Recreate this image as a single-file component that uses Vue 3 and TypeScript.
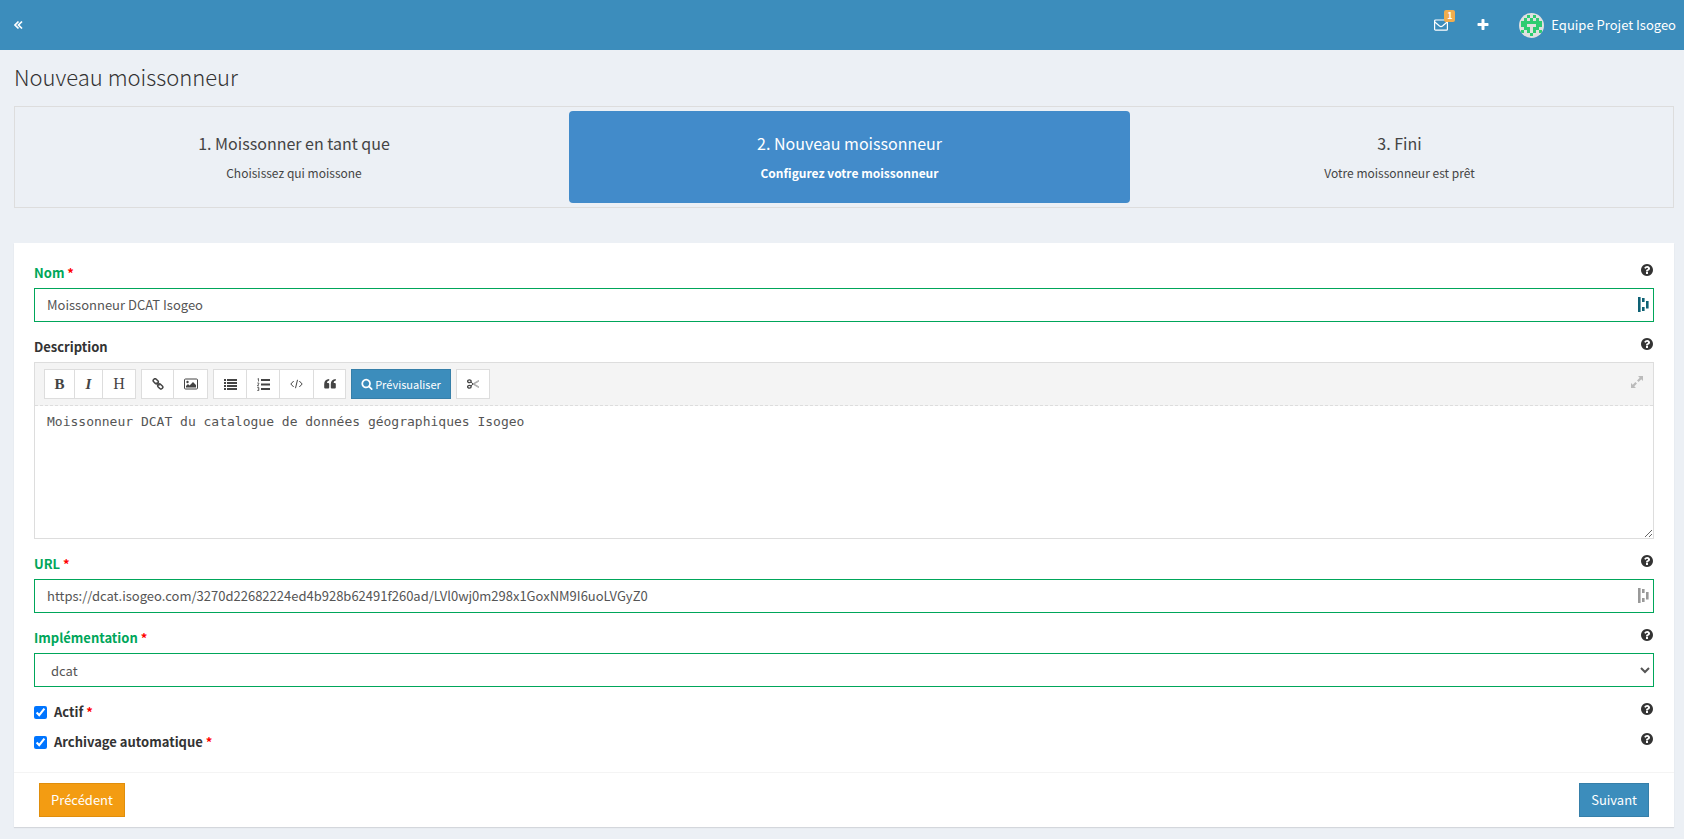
<script setup lang="ts">
import { ref } from 'vue'

const steps = [
  { title: '1. Moissonner en tant que', text: 'Choisissez qui moissone', active: false },
  { title: '2. Nouveau moissonneur', text: 'Configurez votre moissonneur', active: true },
  { title: '3. Fini', text: 'Votre moissonneur est prêt', active: false },
]

const name = ref('Moissonneur DCAT Isogeo')
const description = ref('Moissonneur DCAT du catalogue de données géographiques Isogeo')
const url = ref('https://dcat.isogeo.com/3270d22682224ed4b928b62491f260ad/LVl0wj0m298x1GoxNM9I6uoLVGyZ0')
const backend = ref('dcat')
const active = ref(true)
const autoarchive = ref(true)

const help =
  'M1024 1376v-192q0-14-9-23t-23-9h-192q-14 0-23 9t-9 23v192q0 14 9 23t23 9h192q14 0 23-9t9-23zm256-672q0-88-55.5-163t-138.5-116-170-41q-243 0-371 213-15 24 8 42l132 100q7 6 19 6 16 0 25-12 53-68 86-92 34-24 86-24 48 0 85.5 26t37.5 59q0 38-20 61t-68 45q-63 28-115.5 86.5t-52.5 125.5v36q0 14 9 23t23 9h192q14 0 23-9t9-23q0-19 21.5-49.5t54.5-49.5q32-18 49-28.5t46-35 44.5-48 28-60.5 12.5-81zm384 192q0 209-103 385.5t-279.5 279.5-385.5 103-385.5-103-279.5-279.5-103-385.5 103-385.5 279.5-279.5 385.5-103 385.5 103 279.5 279.5 103 385.5z'

const managerIcon = 'M0 0h2.6v15H0zM4 1h2.6v4H4zM4 10h2.6v4H4zM8 4h2.6v7.500H8z'

// 7x7 identicon, one string per row
const identicon = ['..#.#..', '.#.#.#.', '#######', '##...##', '.##.##.', '#.#.#.#', '...#...']
const cells = identicon.flatMap((row, y) =>
  [...row].map((c, x) => ({ x, y, on: c === '#' })).filter((c) => c.on),
)
</script>

<template>
  <div class="page">
    <header class="topbar">
      <button class="bar-button" type="button" aria-label="Replier le menu">
        <svg width="9" height="10" viewBox="0 0 9 10" fill="none" stroke="#fff" stroke-width="1.7">
          <path d="M4.5 1.500 1 5l3.500 3.500M8 1.500 4.500 5l3.500 3.500" />
        </svg>
      </button>
      <nav class="top-nav">
        <a href="#" class="mail" aria-label="Notifications">
          <svg width="14" height="12" viewBox="0 0 14 12" fill="none" stroke="#fff" stroke-width="1.2">
            <rect x=".6" y="1" width="12.800" height="10.200" rx="1" />
            <path d="M.8 3 5.500 7q1.500 1.200 3 0l4.700-4" />
          </svg>
          <span class="badge">1</span>
        </a>
        <a href="#" class="add" aria-label="Ajouter">
          <svg width="14" height="14" viewBox="0 0 1792 1792" fill="#fff">
            <path
              d="M1600 736v192q0 40-28 68t-68 28h-416v416q0 40-28 68t-68 28h-192q-40 0-68-28t-28-68v-416h-416q-40 0-68-28t-28-68v-192q0-40 28-68t68-28h416v-416q0-40 28-68t68-28h192q40 0 68 28t28 68v416h416q40 0 68 28t28 68z"
            />
          </svg>
        </a>
        <a href="#" class="user">
          <svg class="avatar" width="25" height="25" viewBox="0 0 25 25" shape-rendering="crispEdges">
            <rect width="25" height="25" fill="#e0e0e0" />
            <rect
              v-for="c in cells"
              :key="`${c.x}-${c.y}`"
              :x="2 + c.x * 3"
              :y="2 + c.y * 3"
              width="3"
              height="3"
              fill="#2ecc71"
            />
          </svg>
          <span>Equipe Projet Isogeo</span>
        </a>
      </nav>
    </header>

    <main class="content">
      <h1>Nouveau moissonneur</h1>

      <ol class="steps">
        <li v-for="s in steps" :key="s.title" :class="{ active: s.active }">
          <h4>{{ s.title }}</h4>
          <p>{{ s.text }}</p>
        </li>
      </ol>

      <form class="box" @submit.prevent>
        <div class="box-body">
          <div class="field valid">
            <div class="label-row">
              <label for="name">Nom <em>*</em></label>
              <svg class="help" viewBox="0 0 1792 1792"><path :d="help" /></svg>
            </div>
            <div class="control">
              <input id="name" v-model="name" type="text" />
              <svg class="manager teal" width="11" height="15" viewBox="0 0 11 15">
                <path :d="managerIcon" />
              </svg>
            </div>
          </div>

          <div class="field">
            <div class="label-row">
              <label for="description">Description</label>
              <svg class="help" viewBox="0 0 1792 1792"><path :d="help" /></svg>
            </div>
            <div class="editor">
              <div class="toolbar">
                <div class="group">
                  <button type="button" class="w31 serif" title="Gras">B</button>
                  <button type="button" class="w29 serif italic" title="Italique">I</button>
                  <button type="button" class="w34 serif head" title="Titre">H</button>
                </div>
                <div class="group">
                  <button type="button" class="w33" title="Lien">
                    <svg width="12" height="12" viewBox="0 0 12 12" fill="none" stroke="#444" stroke-width="1.500">
                      <rect x="1" y="1.500" width="5.500" height="3.600" rx="1.600" transform="rotate(45 3.750 3.300)" />
                      <rect x="5.500" y="6.700" width="5.500" height="3.600" rx="1.600" transform="rotate(45 8.250 8.500)" />
                      <path d="m4.500 4.500 3 3" />
                    </svg>
                  </button>
                  <button type="button" class="w35" title="Image">
                    <svg width="14" height="12" viewBox="0 0 14 12">
                      <rect x=".5" y="1" width="13" height="10" rx="1" fill="none" stroke="#444" />
                      <circle cx="3.500" cy="4" r="1.200" fill="#444" />
                      <path d="M2 9.500V8l2-2 1.500 1.500L9 4l3 3v2.500z" fill="#444" />
                    </svg>
                  </button>
                </div>
                <div class="group">
                  <button type="button" class="w34" title="Liste">
                    <svg width="13" height="11" viewBox="0 0 13 11" fill="#444">
                      <path d="M0 0h2v2H0zM3 0h10v2H3zM0 3h2v2H0zM3 3h10v2H3zM0 6h2v2H0zM3 6h10v2H3zM0 9h2v2H0zM3 9h10v2H3z" />
                    </svg>
                  </button>
                  <button type="button" class="w34" title="Liste numérotée">
                    <svg width="13" height="13" viewBox="0 0 13 13" fill="#444">
                      <path d="M4 1h9v2H4zM4 5.500h9v2H4zM4 10h9v2H4z" />
                      <path
                        d="M.5 1 1.500.5v3M.3 5h1.500v1L.3 7.800h1.700M.3 9.500h1.500v3H.3M.8 11h1"
                        fill="none"
                        stroke="#444"
                        stroke-width=".8"
                      />
                    </svg>
                  </button>
                  <button type="button" class="w35" title="Code">
                    <svg width="13" height="10" viewBox="0 0 13 10" fill="none" stroke="#444">
                      <path d="M3.700 2 .8 5l2.900 3M9.300 2l2.900 3-2.900 3M7.500.8l-2 8.400" />
                    </svg>
                  </button>
                  <button type="button" class="w33" title="Citation">
                    <svg width="12" height="10" viewBox="0 0 12 10" fill="#444">
                      <path
                        d="M5.200 0v1.400Q3 1.700 3 4h1.200q1 0 1 1v3.500q0 1-1 1H1.200q-1 0-1-1V5Q.2.400 5.200 0zM11.800 0v1.400Q9.600 1.700 9.600 4h1.200q1 0 1 1v3.500q0 1-1 1h-3q-1 0-1-1V5q0-4.600 5-5z"
                      />
                    </svg>
                  </button>
                </div>
                <button type="button" class="preview">
                  <svg width="12" height="12" viewBox="0 0 1792 1792" fill="#fff">
                    <path
                      d="M1216 832q0-185-131.500-316.500t-316.500-131.500-316.500 131.500-131.500 316.500 131.500 316.500 316.500 131.500 316.500-131.500 131.500-316.500zm512 832q0 52-38 90t-90 38q-54 0-90-38l-343-342q-179 124-399 124-143 0-273.500-55.500t-225-150-150-225-55.500-273.500 55.500-273.500 150-225 225-150 273.500-55.500 273.500 55.500 225 150 150 225 55.500 273.500q0 220-124 399l343 343q37 37 37 90z"
                    />
                  </svg>
                  <span>Prévisualiser</span>
                </button>
                <div class="group">
                  <button type="button" class="w34" title="Couper">
                    <svg width="12" height="10" viewBox="0 0 12 10" fill="none" stroke="#444">
                      <ellipse cx="2.400" cy="2.200" rx="1.800" ry="1.400" stroke-width="1.300" />
                      <ellipse cx="2.400" cy="7.800" rx="1.800" ry="1.400" stroke-width="1.300" />
                      <path d="M4 3.200 6 4.800M4 6.800 6 5.200" />
                      <path d="m6 4.800 5.500-3.300v1L7 5l4.500 2.500v1L6 5.200" stroke="#888" stroke-width=".7" />
                    </svg>
                  </button>
                </div>
                <button type="button" class="expand" title="Plein écran">
                  <svg width="12" height="12" viewBox="0 0 12 12" fill="#bbb" stroke="#bbb">
                    <path d="M7 0h5v5zM0 7v5h5z" stroke="none" />
                    <path d="M10 2 6.800 5.200M5.200 6.800 2 10" stroke-width="2.200" />
                  </svg>
                </button>
              </div>
              <textarea id="description" v-model="description" spellcheck="false"></textarea>
            </div>
          </div>

          <div class="field valid">
            <div class="label-row">
              <label for="url">URL <em>*</em></label>
              <svg class="help" viewBox="0 0 1792 1792"><path :d="help" /></svg>
            </div>
            <div class="control">
              <input id="url" v-model="url" type="text" />
              <svg class="manager" width="11" height="15" viewBox="0 0 11 15">
                <path :d="managerIcon" />
              </svg>
            </div>
          </div>

          <div class="field valid">
            <div class="label-row">
              <label for="backend">Implémentation <em>*</em></label>
              <svg class="help" viewBox="0 0 1792 1792"><path :d="help" /></svg>
            </div>
            <select id="backend" v-model="backend">
              <option value="dcat">dcat</option>
            </select>
          </div>

          <div class="check-row">
            <input id="active" v-model="active" type="checkbox" />
            <label for="active">Actif <em>*</em></label>
            <svg class="help" viewBox="0 0 1792 1792"><path :d="help" /></svg>
          </div>
          <div class="check-row">
            <input id="autoarchive" v-model="autoarchive" type="checkbox" />
            <label for="autoarchive">Archivage automatique <em>*</em></label>
            <svg class="help" viewBox="0 0 1792 1792"><path :d="help" /></svg>
          </div>
        </div>

        <footer class="box-footer">
          <button type="button" class="btn warning">Précédent</button>
          <button type="submit" class="btn primary">Suivant</button>
        </footer>
      </form>
    </main>
  </div>
</template>

<style>
html,
body {
  background: #ecf0f5;
}
</style>

<style scoped>
* {
  box-sizing: border-box;
}
.page {
  min-height: 100vh;
  background: #ecf0f5;
  color: #333;
  font: 13px/20px 'Noto Sans CJK SC', 'Noto Sans', sans-serif;
}
button,
input,
select {
  font: inherit;
  margin: 0;
}
svg {
  display: block;
  flex: none;
}
.topbar {
  display: flex;
  justify-content: space-between;
  align-items: center;
  height: 50px;
  padding: 0 8px 0 14px;
  background: #3c8dbc;
  color: #fff;
}
.bar-button {
  padding: 0;
  border: 0;
  background: none;
}
.top-nav {
  display: flex;
  align-items: center;
}
.top-nav a {
  color: #fff;
  text-decoration: none;
}
.mail {
  position: relative;
  margin-right: 28px;
}
.badge {
  position: absolute;
  left: 10px;
  top: -9px;
  width: 11px;
  height: 12px;
  border-radius: 2px;
  background: #f0ad4e;
  font-size: 9px;
  font-weight: 700;
  line-height: 12px;
  text-align: center;
}
.add {
  margin-right: 29px;
}
.user {
  display: flex;
  align-items: center;
  gap: 7px;
}
.avatar {
  border-radius: 50%;
}
.content {
  padding: 12px 10px 12px 14px;
}
h1 {
  margin: 0;
  font-size: 22px;
  font-weight: 300;
  line-height: 28px;
}
.steps {
  display: grid;
  grid-template-columns: 550fr 561fr 539fr;
  list-style: none;
  margin: 16px 0 35px;
  padding: 4px;
  border: 1px solid #ddd;
  text-align: center;
  color: #444;
}
.steps li {
  padding: 20px 0;
  border-radius: 4px;
}
.steps h4 {
  margin: 0 0 7px;
  font-size: 16px;
  font-weight: 400;
  line-height: 25px;
}
.steps p {
  margin: 0;
  font-size: 12px;
  line-height: 20px;
}
.steps .active {
  background: #428bca;
  color: #fff;
}
.steps .active p {
  font-weight: 700;
}
.box {
  background: #fff;
  box-shadow: 0 1px 1px rgba(0, 0, 0, 0.1);
}
.box-body {
  padding: 20px;
}
.field {
  margin-bottom: 15px;
}
.label-row,
.check-row {
  display: flex;
  justify-content: space-between;
}
.label-row {
  padding-bottom: 5px;
}
label {
  font-weight: 700;
}
em {
  color: #f00;
  font-style: normal;
}
.valid label {
  color: #00a65a;
}
.help {
  width: 14px;
  height: 14px;
  fill: #333;
}
.control {
  position: relative;
}
.control input,
select {
  display: block;
  width: 100%;
  height: 34px;
  padding: 6px 12px;
  border: 1px solid #00a65a;
  border-radius: 0;
  background: #fff;
  color: #555;
}
.control input {
  padding-bottom: 8px;
}
.manager {
  position: absolute;
  right: 5px;
  top: 9px;
  fill: #999;
}
.manager.teal {
  fill: #0e6174;
}
.editor {
  border: 1px solid #ddd;
}
.toolbar {
  display: flex;
  gap: 5px;
  padding: 6px 9px;
  background: #f4f4f4;
  border-bottom: 1px dashed #ddd;
}
.toolbar button {
  display: flex;
  align-items: center;
  justify-content: center;
  height: 30px;
  padding: 0;
  border: 1px solid #ddd;
  background: #fff;
  color: #444;
}
.group {
  display: flex;
}
.group button + button {
  margin-left: -1px;
}
.toolbar .serif {
  font: 700 15px 'Liberation Serif', serif;
}
.toolbar .italic {
  font-style: italic;
}
.toolbar .head {
  font-size: 16px;
  font-weight: 400;
}
.w29 {
  width: 29px;
}
.w31 {
  width: 31px;
}
.w33 {
  width: 33px;
}
.w34 {
  width: 34px;
}
.w35 {
  width: 35px;
}
.toolbar .preview {
  gap: 2px;
  width: 100px;
  border-color: #367fa9;
  background: #3c8dbc;
  color: #fff;
  font-size: 11px;
}
.toolbar .expand {
  margin-left: auto;
  width: 14px;
  height: 26px;
  border: 0;
  background: none;
}
textarea {
  display: block;
  width: 100%;
  height: 132px;
  padding: 6px 12px;
  border: 0;
  resize: vertical;
  background: #fff;
  color: #555;
  font: 13px/20px 'DejaVu Sans Mono', monospace;
}
.check-row + .check-row {
  margin-top: 10px;
}
.check-row input {
  width: 13px;
  height: 13px;
  margin: 4px 7px 0 0;
}
.check-row .help {
  margin-left: auto;
}
.box-footer {
  display: flex;
  justify-content: space-between;
  padding: 10px 25px;
  border-top: 1px solid #f4f4f4;
}
.btn {
  height: 34px;
  padding: 0 11px;
  border: 1px solid;
  color: #fff;
}
.warning {
  border-color: #e08e0b;
  background: #f39c12;
}
.primary {
  border-color: #367fa9;
  background: #3c8dbc;
}
</style>
